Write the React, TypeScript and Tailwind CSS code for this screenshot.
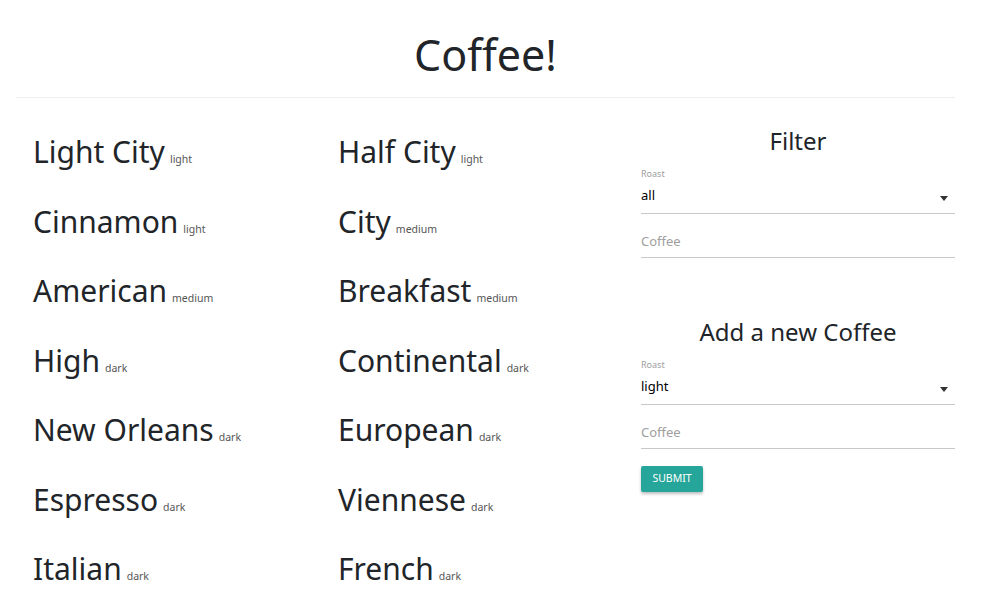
interface Coffee {
  name: string;
  roast: string;
}

const coffees: Coffee[] = [
  { name: "Light City", roast: "light" },
  { name: "Half City", roast: "light" },
  { name: "Cinnamon", roast: "light" },
  { name: "City", roast: "medium" },
  { name: "American", roast: "medium" },
  { name: "Breakfast", roast: "medium" },
  { name: "High", roast: "dark" },
  { name: "Continental", roast: "dark" },
  { name: "New Orleans", roast: "dark" },
  { name: "European", roast: "dark" },
  { name: "Espresso", roast: "dark" },
  { name: "Viennese", roast: "dark" },
  { name: "Italian", roast: "dark" },
  { name: "French", roast: "dark" },
];

function SelectField({ value }: { value: string }) {
  return (
    <div>
      <div className="text-[9px] leading-[12px] text-[#9e9e9e]">Roast</div>
      <div className="flex items-center justify-between h-[34px] border-b border-[#c8c8c8] pb-[3px]">
        <span className="text-[13px] leading-[18px] text-black">{value}</span>
        <span className="w-0 h-0 mt-[6px] mr-[7px] border-l-[4px] border-r-[4px] border-t-[5px] border-l-transparent border-r-transparent border-t-[#333]" />
      </div>
    </div>
  );
}

function TextField() {
  return (
    <div className="flex items-end h-[44px] border-b border-[#c8c8c8] pb-[7px]">
      <span className="text-[13px] leading-[18px] text-[#a0a0a0]">Coffee</span>
    </div>
  );
}

export default function App() {
  return (
    <div className="min-h-screen bg-white text-[#212529] font-['Noto_Sans',sans-serif]">
      <div className="ml-[16px] w-[939px]">
        <header className="pt-[28px] pb-[15px] border-b border-[#eeeeee]">
          <h1 className="text-center text-[43px] leading-[54px]">Coffee!</h1>
        </header>

        <div className="flex pt-[19px]">
          {/* Coffee list */}
          <div className="w-[625px] grid grid-cols-[305px_305px]">
            {coffees.map((coffee) => (
              <div key={coffee.name} className="flex items-baseline h-[69.5px] pl-[17px]">
                <span className="text-[30px] leading-[69.5px]">{coffee.name}</span>
                <span className="ml-[5px] text-[10.5px] text-[#555]">{coffee.roast}</span>
              </div>
            ))}
          </div>

          {/* Forms */}
          <div className="w-[314px]">
            <h2 className="text-center text-[24px] leading-[30px] mt-[9px] mb-[12px]">Filter</h2>
            <SelectField value="all" />
            <TextField />

            <h2 className="text-center text-[24px] leading-[30px] mt-[59px] mb-[12px]">Add a new Coffee</h2>
            <SelectField value="light" />
            <TextField />
            <button className="mt-[17px] h-[26px] w-[62px] rounded-[2px] bg-[#26a69a] text-white text-[10.5px] uppercase shadow-[0_2px_3px_rgba(0,0,0,0.25)]">
              Submit
            </button>
          </div>
        </div>
      </div>
    </div>
  );
}
